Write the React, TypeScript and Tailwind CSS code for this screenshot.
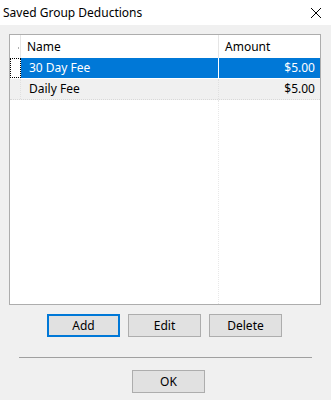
import React from "react";

const rows = [
  { name: "30 Day Fee", amount: "$5.00", selected: true },
  { name: "Daily Fee", amount: "$5.00", selected: false },
];

const Btn = ({ label, focused }: { label: string; focused?: boolean }) => (
  <button
    className={
      "w-[73px] h-[23px] bg-[#e1e1e1] text-[12px] text-black leading-none " +
      (focused ? "border-2 border-[#0078d7]" : "border border-[#adadad]")
    }
  >
    {label}
  </button>
);

const App = () => {
  return (
    <div
      className="w-[331px] h-[400px] bg-[#f0f0f0] flex flex-col text-black"
      style={{ fontFamily: '"Noto Sans", "Open Sans", sans-serif' }}
    >
      <div className="h-[25px] bg-white flex items-center justify-between pl-[3px] pr-[9px]">
        <span className="text-[12px]">Saved Group Deductions</span>
        <svg width="12" height="12" viewBox="0 0 12 12">
          <path d="M1 1 L11 11 M11 1 L1 11" stroke="#000" strokeWidth="1" />
        </svg>
      </div>

      <div className="mt-[9px] ml-[9px] w-[312px] h-[271px] border border-[#adadad] bg-white flex flex-col text-[12px]">
        <div className="grid grid-cols-[11px_198px_101px] h-[23px] shrink-0">
          <div className="border-r border-[#e5e5e5] relative">
            <span className="absolute right-[1px] top-[12px] w-[1px] h-[2px] bg-[#b0b0b0]" />
          </div>
          <div className="border-r border-[#e5e5e5] pl-[6px] flex items-center">Name</div>
          <div className="pl-[6px] flex items-center">Amount</div>
        </div>
        {rows.map((r) => (
          <div
            key={r.name}
            className={
              "grid grid-cols-[11px_198px_101px] h-[21px] shrink-0 border-b border-dotted " +
              (r.selected ? "bg-white border-white" : "bg-[#f0f0f0] border-[#d8d8d8]")
            }
          >
            <div
              className={
                r.selected
                  ? "border border-dotted border-black"
                  : "border-r border-dotted border-[#e0e0e0]"
              }
            />
            <div
              className={
                "pl-[8px] flex items-center border-r " +
                (r.selected ? "bg-[#0078d7] text-white border-white" : "border-dotted border-[#e0e0e0]")
              }
            >
              {r.name}
            </div>
            <div
              className={
                "pr-[5px] flex items-center justify-end " +
                (r.selected ? "bg-[#0078d7] text-white" : "")
              }
            >
              {r.amount}
            </div>
          </div>
        ))}
        <div className="flex-1 grid grid-cols-[11px_198px_101px]">
          <div />
          <div className="border-r border-dotted border-[#e8e8e8]" />
          <div />
        </div>
      </div>

      <div className="flex gap-[8px] ml-[47px] mt-[9px]">
        <Btn label="Add" focused />
        <Btn label="Edit" />
        <Btn label="Delete" />
      </div>

      <div className="mx-[19px] mt-[20px] h-[1px] bg-[#a0a0a0]" />

      <div className="flex ml-[132px] mt-[12px]">
        <Btn label="OK" />
      </div>
    </div>
  );
};

export default App;
